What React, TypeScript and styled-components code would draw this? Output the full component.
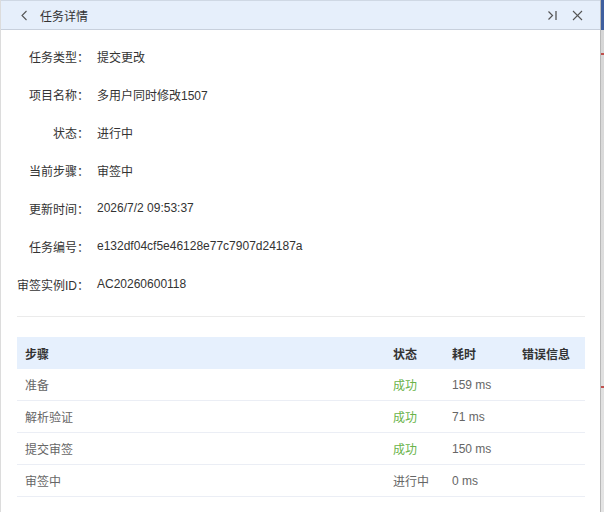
import React from "react";
import styled, { createGlobalStyle } from "styled-components";

const Global = createGlobalStyle`
  html, body { margin: 0; padding: 0; background: #ffffff; }
  body { font-family: "Liberation Sans", "Noto Sans CJK SC", sans-serif; font-size: 12px; color: #333; }
  * { box-sizing: border-box; }
`;

const Page = styled.div`
  display: flex;
  width: 604px;
  height: 512px;
  overflow: hidden;
`;

const Panel = styled.div`
  width: 600px;
  height: 512px;
  display: flex;
  flex-direction: column;
  background: #fff;
  border-left: 1px solid #dcdcdc;
`;

const Backdrop = styled.div`
  width: 4px;
  height: 512px;
  border-left: 1px solid #b8b8b8;
  background:
    linear-gradient(#c0504d, #c0504d) 0 53px / 100% 2px no-repeat,
    linear-gradient(#c0504d, #c0504d) 0 386px / 100% 2px no-repeat,
    linear-gradient(#3f5f9f 0, #3f5f9f 30px, #d6d6d6 30px, #e4e4e4 100%);
`;

const Header = styled.div`
  height: 30px;
  display: flex;
  align-items: center;
  background: #e6effb;
  border-top: 1px solid #cfd8e4;
  border-bottom: 1px solid #c8d0dc;
  padding: 0 17px 0 17px;
`;

const Title = styled.div`
  margin-left: 10px;
  font-size: 12px;
  color: #333;
  flex: 1;
`;

const IconButton = styled.span<{ $gap?: number }>`
  display: inline-flex;
  align-items: center;
  justify-content: center;
  width: 12px;
  height: 12px;
  margin-left: ${(p) => p.$gap ?? 0}px;
  color: #555;
`;

const Body = styled.div`
  flex: 1;
  padding: 7px 15px 0 16px;
  display: flex;
  flex-direction: column;
`;

const Fields = styled.div`
  display: flex;
  flex-direction: column;
`;

const Field = styled.div`
  display: flex;
  align-items: center;
  height: 38px;
`;

const Label = styled.div`
  width: 72px;
  text-align: right;
  color: #333;
  white-space: nowrap;
`;

const Value = styled.div`
  margin-left: 8px;
  color: #333;
`;

const Divider = styled.div`
  height: 1px;
  background: #ebebeb;
  margin: 13px 0 20px;
`;

const Table = styled.div`
  display: flex;
  flex-direction: column;
`;

const Row = styled.div<{ $head?: boolean }>`
  display: grid;
  grid-template-columns: 368px 59px 70px 1fr;
  height: 32px;
  align-items: center;
  background: ${(p) => (p.$head ? "#e6f0fd" : "#fff")};
  border-bottom: ${(p) => (p.$head ? "none" : "1px solid #ebeef5")};
  color: ${(p) => (p.$head ? "#333" : "#666")};
  font-weight: ${(p) => (p.$head ? 600 : 400)};
`;

const Cell = styled.div<{ $ok?: boolean }>`
  padding-left: 8px;
  color: ${(p) => (p.$ok ? "#6ab34a" : "inherit")};
  white-space: nowrap;
`;

const fields: [string, string][] = [
  ["任务类型：", "提交更改"],
  ["项目名称：", "多用户同时修改1507"],
  ["状态：", "进行中"],
  ["当前步骤：", "审签中"],
  ["更新时间：", "2026/7/2 09:53:37"],
  ["任务编号：", "e132df04cf5e46128e77c7907d24187a"],
  ["审签实例ID：", "AC20260600118"],
];

const steps = [
  { name: "准备", status: "成功", ok: true, time: "159 ms" },
  { name: "解析验证", status: "成功", ok: true, time: "71 ms" },
  { name: "提交审签", status: "成功", ok: true, time: "150 ms" },
  { name: "审签中", status: "进行中", ok: false, time: "0 ms" },
];

export default function App() {
  return (
    <Page>
      <Global />
      <Panel>
        <Header>
          <IconButton>
            <svg width="8" height="11" viewBox="0 0 8 11">
              <polyline points="6.5,1 2,5.5 6.5,10" fill="none" stroke="#555" strokeWidth="1.1" />
            </svg>
          </IconButton>
          <Title>任务详情</Title>
          <IconButton>
            <svg width="11" height="11" viewBox="0 0 11 11">
              <polyline points="1.5,1.5 5.5,5.5 1.5,9.5" fill="none" stroke="#555" strokeWidth="1.2" />
              <line x1="9" y1="1" x2="9" y2="10" stroke="#555" strokeWidth="1.3" />
            </svg>
          </IconButton>
          <IconButton $gap={13}>
            <svg width="11" height="11" viewBox="0 0 11 11">
              <line x1="1" y1="1" x2="10" y2="10" stroke="#555" strokeWidth="1.1" />
              <line x1="10" y1="1" x2="1" y2="10" stroke="#555" strokeWidth="1.1" />
            </svg>
          </IconButton>
        </Header>
        <Body>
          <Fields>
            {fields.map(([k, v]) => (
              <Field key={k}>
                <Label>{k}</Label>
                <Value>{v}</Value>
              </Field>
            ))}
          </Fields>
          <Divider />
          <Table>
            <Row $head>
              <Cell>步骤</Cell>
              <Cell>状态</Cell>
              <Cell>耗时</Cell>
              <Cell>错误信息</Cell>
            </Row>
            {steps.map((s) => (
              <Row key={s.name}>
                <Cell>{s.name}</Cell>
                <Cell $ok={s.ok}>{s.status}</Cell>
                <Cell>{s.time}</Cell>
                <Cell></Cell>
              </Row>
            ))}
          </Table>
        </Body>
      </Panel>
      <Backdrop />
    </Page>
  );
}
